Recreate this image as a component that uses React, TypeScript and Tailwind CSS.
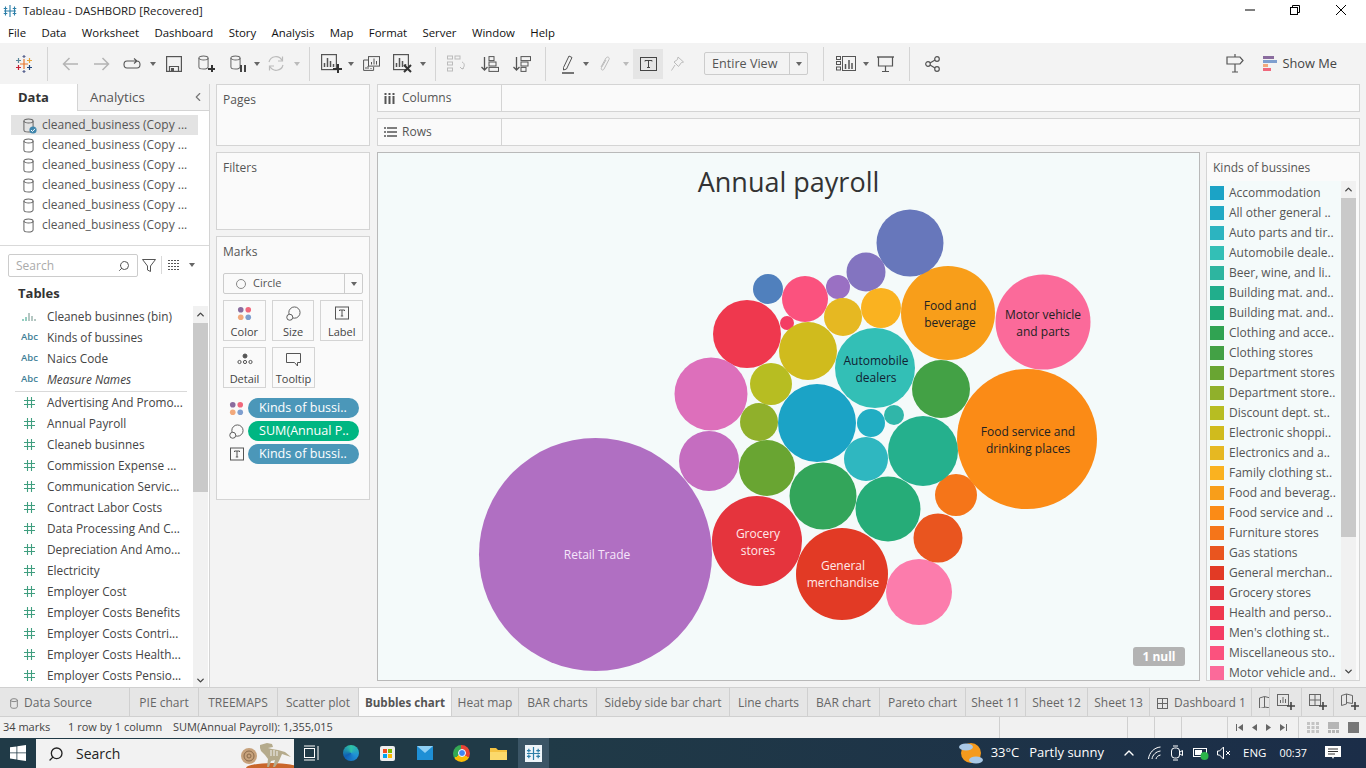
import React from 'react';
import { Search, ChevronLeft, ChevronUp, ChevronDown } from 'lucide-react';

const F = "[font-family:'Open_Sans',sans-serif]";

const Caret = ({ c = '#666' }: { c?: string }) => (
  <svg width="6" height="4" viewBox="0 0 6 4" className="shrink-0"><path d="M0 0h6L3 4z" fill={c} /></svg>
);

const Cyl = ({ c = '#555', w = 11, h = 15 }: { c?: string; w?: number; h?: number }) => (
  <svg width={w} height={h} viewBox="0 0 12 16" fill="none" stroke={c} strokeWidth="1.1" className="shrink-0">
    <ellipse cx="6" cy="3" rx="5" ry="2.2" />
    <path d="M1 3v10c0 1.3 2.2 2.2 5 2.2s5-.9 5-2.2V3" />
  </svg>
);

const Ico = ({ w = 20, h = 20, children }: { w?: number; h?: number; children: React.ReactNode }) => (
  <svg width={w} height={h} viewBox={`0 0 ${w} ${h}`} fill="none" stroke="#555" strokeWidth="1.2" className="shrink-0">{children}</svg>
);

const Colors = () => (
  <svg width="15" height="15" viewBox="0 0 16 16" className="shrink-0">
    <circle cx="4" cy="4" r="3" fill="#8a6c9e" /><circle cx="12" cy="4" r="3" fill="#f0687c" />
    <circle cx="4" cy="12" r="3" fill="#f2a97c" /><circle cx="12" cy="12" r="3" fill="#7f9fcf" />
  </svg>
);
const SizeI = () => (
  <svg width="15" height="15" viewBox="0 0 16 16" fill="none" stroke="#555" strokeWidth="1" className="shrink-0">
    <circle cx="9" cy="7" r="6" /><circle cx="4" cy="12" r="3.2" fill="#fafafa" />
  </svg>
);
const LabelI = () => (
  <svg width="14" height="14" viewBox="0 0 14 14" fill="none" stroke="#555" strokeWidth="1" className="shrink-0">
    <rect x=".5" y="1" width="13" height="12" /><path d="M4.5 5V4h5v1M7 4v6M5.8 10h2.4" />
  </svg>
);

const Sep = () => <div className="w-px h-[34px] bg-[#d4d4d4] shrink-0" />;

const ChartBase = () => (
  <Ico w={16} h={17}><rect x=".6" y=".6" width="14.800" height="15" /><path d="M3.500 13V9M6.500 13V4M9.500 13V7M12.500 13V10" strokeWidth="1.500" /></Ico>
);

function Toolbar() {
  return (
    <div className="h-[41px] bg-[#f3f3f3] flex items-center shrink-0 relative">
      <div className="w-[47px] flex justify-center shrink-0">
        <svg width="18" height="18" viewBox="0 0 18 18" strokeWidth="1.2" fill="none">
          <path d="M9 4v10M5 9h8" stroke="#e8762c" /><path d="M3.500 3v5M1 5.500h5" stroke="#5b879b" /><path d="M14.500 3v5M12 5.500h5" stroke="#e8a33a" />
          <path d="M3.500 10v5M1 12.500h5" stroke="#c72035" /><path d="M14.500 10v5M12 12.500h5" stroke="#1f447a" /><path d="M9 0v3M7.500 1.500h3M9 15v3M7.500 16.500h3" stroke="#5b6591" />
        </svg>
      </div>
      <Sep />
      <div className="ml-[14px]"><Ico w={16} h={14}><path d="M16 7H1.500M7.500 1L1.500 7l6 6" stroke="#b4b4b4" strokeWidth="1.500" /></Ico></div>
      <div className="ml-[16px]"><Ico w={16} h={14}><path d="M0 7h14.500M8.500 1l6 6-6 6" stroke="#b4b4b4" strokeWidth="1.500" /></Ico></div>
      <div className="ml-[13px]"><Ico w={18} h={11}><path d="M13 3H4C0 3 0 10 4 10h10c4 0 4-7 0-7M11 .5l3 2.500-3 2.500" strokeWidth="1.100" /></Ico></div>
      <div className="ml-[9px]"><Caret /></div>
      <div className="ml-[10px]"><Ico w={16} h={16}><rect x=".6" y=".6" width="14.800" height="14.800" /><path d="M3.500 15.500v-5h9v5" /><rect x="5" y="12" width="3" height="3" fill="#555" stroke="none" /></Ico></div>
      <div className="ml-[16px] relative w-[16px] h-[17px]"><Cyl c="#666" /><span className="absolute right-[-1px] bottom-[0px] w-[7px] h-[7px] bg-[linear-gradient(#333,#333)] bg-[length:7px_2px] bg-center bg-no-repeat" /><span className="absolute right-[-1px] bottom-[0px] w-[7px] h-[7px] bg-[linear-gradient(#333,#333)] bg-[length:2px_7px] bg-center bg-no-repeat" /></div>
      <div className="ml-[16px] relative w-[16px] h-[17px]"><Cyl c="#666" /><span className="absolute right-[0px] bottom-[0px] w-[6px] h-[7px] border-x-2 border-[#444]" /></div>
      <div className="ml-[8px]"><Caret /></div>
      <div className="ml-[7px]"><Ico w={18} h={17}><path d="M2 7a7 7 0 0 1 13-1.500M16 10a7 7 0 0 1-13 1.500" stroke="#bbb" /><path d="M15.500 1.500v4.500h-4.500M2.500 15.500v-4.500h4.500" stroke="#bbb" /></Ico></div>
      <div className="ml-[9px]"><Caret c="#bbb" /></div>
      <div className="ml-[9px]"><Sep /></div>
      <div className="ml-[11px] relative w-[21px] h-[19px]">
        <ChartBase />
        <span className="absolute right-0 bottom-0 w-[9px] h-[9px] bg-[linear-gradient(#333,#333)] bg-[length:9px_2px] bg-center bg-no-repeat" />
        <span className="absolute right-0 bottom-0 w-[9px] h-[9px] bg-[linear-gradient(#333,#333)] bg-[length:2px_9px] bg-center bg-no-repeat" />
      </div>
      <div className="ml-[6px]"><Caret /></div>
      <div className="ml-[9px]"><Ico w={17} h={15}><rect x="5.500" y=".6" width="11" height="9.500" fill="#f3f3f3" strokeWidth="1" /><path d="M8.500 8.500V6M11 8.500V2.500M13.500 8.500V5" strokeWidth="1" /><path d="M5 4H.6v10.400h10v-3.500M3 13v-2M5 13v-3M8 13v-1" strokeWidth="1" /></Ico></div>
      <div className="ml-[13px] relative w-[18px] h-[19px]">
        <ChartBase />
        <svg width="9" height="9" viewBox="0 0 9 9" className="absolute right-[-1px] bottom-[0px]"><path d="M1 1l7 7M8 1L1 8" stroke="#333" strokeWidth="2" /></svg>
      </div>
      <div className="ml-[9px]"><Caret /></div>
      <div className="ml-[9px]"><Sep /></div>
      <div className="ml-[11px]"><Ico w={20} h={18}><g stroke="#bbb" strokeWidth="1"><rect x=".5" y="1" width="5" height="3" /><rect x=".5" y="7" width="5" height="3" /><rect x=".5" y="13" width="5" height="3" /><rect x="8" y="1" width="5" height="3" /><path d="M15 7c3 1 3 5 0 7M13 12l2 2 2-1" /></g></Ico></div>
      <div className="ml-[14px]"><Ico w={18} h={16}><path d="M3.500 1v13M.5 11l3 3 3-3" strokeWidth="1.300" /><rect x="8" y=".6" width="5" height="4" strokeWidth="1" /><rect x="8" y="6" width="7" height="4" strokeWidth="1" /><rect x="8" y="11.400" width="9.500" height="4" strokeWidth="1" /></Ico></div>
      <div className="ml-[14px]"><Ico w={18} h={16}><path d="M3.500 1v13M.5 11l3 3 3-3" strokeWidth="1.300" /><rect x="8" y=".6" width="9.500" height="4" strokeWidth="1" /><rect x="8" y="6" width="7" height="4" strokeWidth="1" /><rect x="8" y="11.400" width="5" height="4" strokeWidth="1" /></Ico></div>
      <div className="ml-[14px]"><Sep /></div>
      <div className="ml-[16px]"><Ico w={12} h={20}><path d="M1.500 13.500L7 2l3 1.500-5.500 11.500-3 1z" strokeWidth="1" /><path d="M0 19h12" strokeWidth="1.600" /></Ico></div>
      <div className="ml-[9px]"><Caret /></div>
      <div className="ml-[10px]"><Ico w={12} h={17}><path d="M2 12L7 3c1.500-2 4-.5 3 1.500L5 14c-1 2-3.500 1-2.500-1.500L7 5" stroke="#bbb" strokeWidth="1" /></Ico></div>
      <div className="ml-[12px]"><Caret c="#bbb" /></div>
      <div className="ml-[4px] w-[30px] h-[30px] bg-[#e5e5e5] flex items-center justify-center">
        <svg width="17" height="14" viewBox="0 0 17 14" fill="none" stroke="#444" strokeWidth="1"><rect x=".5" y=".5" width="16" height="13" /><path d="M5 4.500V3.500h7v1M8.500 3.500v7M7 10.500h3" /></svg>
      </div>
      <div className="ml-[8px]"><Ico w={13} h={15}><path d="M7 1l5.500 5-2 .5-3 4-4.500-4.500 3.500-2.500zM4 9l-3.500 5.500" stroke="#bbb" strokeWidth="1" /></Ico></div>
      <div className={`ml-[20px] w-[104px] h-[23px] border border-[#ccc] rounded-[2px] flex items-center bg-[#f3f3f3] text-[#555] text-[12.600px] shrink-0 ${F}`}>
        <span className="w-[85px] pl-[7px] pt-[1px] border-r border-[#ccc] h-full flex items-center whitespace-nowrap">Entire View</span>
        <span className="flex-1 flex justify-center"><Caret /></span>
      </div>
      <div className="ml-[15px]"><Sep /></div>
      <div className="ml-[12px]"><Ico w={20} h={15}><g strokeWidth="1"><rect x=".5" y=".5" width="4" height="3" /><rect x=".5" y="5.500" width="4" height="3" /><rect x=".5" y="11" width="4" height="3" /><rect x="6.500" y=".5" width="13" height="14" /><path d="M9.500 13V8M13 13V4M16 13V7" strokeWidth="1.500" /></g></Ico></div>
      <div className="ml-[7px]"><Caret /></div>
      <div className="ml-[8px]"><Ico w={17} h={16}><path d="M0 1h17" strokeWidth="1.400" /><path d="M1.500 1v9h14V1M8.500 10v5M5 15.500h7" /></Ico></div>
      <div className="ml-[15px]"><Sep /></div>
      <div className="ml-[15px]"><Ico w={15} h={16}><circle cx="3" cy="8" r="2.300" /><circle cx="12" cy="3" r="2.300" /><circle cx="12" cy="13" r="2.300" /><path d="M5 7l5-3M5 9l5 3" /></Ico></div>
      <div className="ml-auto flex items-center">
        <Ico w={18} h={19}><path d="M9 0v3M1 3h13l3 3.500-3 3.500H1zM9 10v8M6 18h6" /></Ico>
        <svg width="14" height="15" viewBox="0 0 14 15" className="ml-[19px]"><rect width="11" height="3" fill="#8a6c9e" /><rect y="4" width="14" height="3" fill="#7f9fcf" /><rect y="8" width="5" height="3" fill="#f2a97c" /><rect y="12" width="8" height="3" fill="#f0687c" /></svg>
        <span className={`ml-[6px] mr-[29px] text-[12.800px] text-[#444] ${F}`}>Show Me</span>
      </div>
    </div>
  );
}

const dsName = 'cleaned_business (Copy ...';

function DataRow({ active }: { active?: boolean }) {
  return (
    <div className={`h-5 ml-[11px] w-[187px] flex items-center pl-[12px] ${active ? 'bg-[#e3e3e3]' : ''} relative`}>
      <Cyl c="#666" />
      {active && (
        <svg width="8" height="8" viewBox="0 0 8 8" className="absolute left-[18px] top-[11px]">
          <circle cx="4" cy="4" r="3.600" fill="#3f86ad" /><path d="M2 4l1.500 1.500L6 2.800" stroke="#fff" fill="none" />
        </svg>
      )}
      <span className={`ml-[8px] text-[12px] text-[#555] whitespace-nowrap ${F}`}>{dsName}</span>
    </div>
  );
}

type Fld = { n: string; t: '#' | 'Abc' | 'bin'; i?: boolean };
const fields: Fld[] = [
  { n: 'Cleaneb businnes (bin)', t: 'bin' }, { n: 'Kinds of bussines', t: 'Abc' }, { n: 'Naics Code', t: 'Abc' },
  { n: 'Measure Names', t: 'Abc', i: true }, { n: 'Advertising And Promo...', t: '#' }, { n: 'Annual Payroll', t: '#' },
  { n: 'Cleaneb businnes', t: '#' }, { n: 'Commission Expense ...', t: '#' }, { n: 'Communication Servic...', t: '#' },
  { n: 'Contract Labor Costs', t: '#' }, { n: 'Data Processing And C...', t: '#' }, { n: 'Depreciation And Amo...', t: '#' },
  { n: 'Electricity', t: '#' }, { n: 'Employer Cost', t: '#' }, { n: 'Employer Costs Benefits', t: '#' },
  { n: 'Employer Costs Contri...', t: '#' }, { n: 'Employer Costs Health...', t: '#' }, { n: 'Employer Costs Pensio...', t: '#' },
];

function FieldRow({ f, idx }: { f: Fld; idx: number }) {
  return (
    <div className={`${idx === 3 ? 'h-[23px] pb-[2px]' : 'h-[21px]'} flex items-center relative whitespace-nowrap`}>
      <span className="w-[47px] pl-[21px] shrink-0 flex items-center">
        {f.t === '#' && (
          <svg width="11" height="11" viewBox="0 0 11 11" stroke="#3f9e7f" strokeWidth="1.100" className="ml-[3px]"><path d="M3.500 0v11M7.500 0v11M0 3.500h11M0 7.500h11" /></svg>
        )}
        {f.t === 'Abc' && <span className={`text-[9.500px] font-semibold text-[#3f7f98] ${F}`}>Abc</span>}
        {f.t === 'bin' && (
          <svg width="15" height="10" viewBox="0 0 15 10" fill="none" strokeWidth="1" className="ml-[1px]"><path d="M1 9V7M4 9V5" stroke="#2a9d83" /><path d="M7 9V1M10 9V4M13 9V7" stroke="#6b8f86" /></svg>
        )}
      </span>
      <span className={`text-[11.800px] text-[#444] ${f.i ? 'italic' : ''} ${F}`}>{f.n}</span>
      {idx === 3 && <span className="absolute left-[15px] right-[6px] bottom-0 h-px bg-[#d9d9d9]" />}
    </div>
  );
}

function LeftPanel() {
  return (
    <div className="w-[210px] shrink-0 bg-white border-r border-[#d4d4d4] flex flex-col">
      <div className="h-[27px] flex items-stretch relative shrink-0">
        <div className={`w-[77px] flex items-center pl-[18px] text-[13px] font-bold text-[#333] bg-white ${F}`}>Data</div>
        <div className={`flex-1 bg-[#f3f3f3] border-l border-b border-[#d4d4d4] flex items-center pl-[12px] pt-[1px] text-[13.300px] text-[#555] ${F}`}>Analytics</div>
        <ChevronLeft className="absolute right-[4px] top-[6px] text-[#777]" size={14} />
      </div>
      <div className="pt-[4px] h-[135px] border-b border-[#d9d9d9] shrink-0">
        <DataRow active /><DataRow /><DataRow /><DataRow /><DataRow /><DataRow />
      </div>
      <div className="flex items-start h-[39px] pl-[8px] pt-[8px] shrink-0">
        <div className="w-[130px] h-[23px] border border-[#ccc] rounded-[2px] flex items-center px-[7px] justify-between">
          <span className={`text-[12px] text-[#aaa] ${F}`}>Search</span>
          <Search size={12} className="text-[#555] -scale-x-100" />
        </div>
        <svg width="14" height="13" viewBox="0 0 14 13" fill="none" stroke="#555" className="ml-[4px] mt-[5px]"><path d="M.5.500h13L8.500 7v5.500l-3-1.500V7z" /></svg>
        <span className="w-px h-[18px] bg-[#d9d9d9] ml-[5px] mt-[2px]" />
        <svg width="12" height="10" viewBox="0 0 12 10" className="ml-[6px] mt-[6px]" fill="none" stroke="#555"><path d="M0 .5h12M0 3.500h12M0 6.500h12M0 9.500h12" strokeDasharray="2 1" /></svg>
        <span className="ml-[9px] mt-[9px]"><Caret /></span>
      </div>
      <div className={`h-[18px] pl-[18px] flex items-center text-[13px] font-bold text-[#333] shrink-0 ${F}`}>Tables</div>
      <div className="flex-1 flex min-h-0 overflow-hidden pt-[3px]">
        <div className="flex-1 overflow-hidden">
          {fields.map((f, i) => <FieldRow key={i} f={f} idx={i} />)}
        </div>
        <div className="w-[15px] mr-[1px] flex flex-col bg-[#f1f1f1]">
          <div className="h-[17px] flex items-center justify-center"><ChevronUp size={11} strokeWidth={3} className="text-[#444]" /></div>
          <div className="h-[169px] bg-[#c9c9c9]" />
          <div className="flex-1" />
          <div className="h-[14px] flex items-center justify-center"><ChevronDown size={11} strokeWidth={3} className="text-[#444]" /></div>
        </div>
      </div>
    </div>
  );
}

const Card = ({ label, children }: { label: string; children: React.ReactNode }) => (
  <div className="w-[43px] h-[41px] border border-[#d4d4d4] bg-[#fafafa] flex flex-col items-center pt-[5px] justify-between pb-[1px]">
    {children}
    <span className={`text-[11px] leading-[15px] text-[#444] ${F}`}>{label}</span>
  </div>
);

const Pill = ({ icon, text, c }: { icon: React.ReactNode; text: string; c: string }) => (
  <div className="flex items-center h-[20px] mb-[3px]">
    <span className="w-[25px] flex justify-end pr-[4px]">{icon}</span>
    <span style={{ backgroundColor: c }} className={`w-[111px] h-[20px] rounded-full text-white text-[12.600px] flex items-center pl-[11px] whitespace-nowrap ${F}`}>{text}</span>
  </div>
);

function MiddlePanel() {
  return (
    <div className="w-[154px] shrink-0 flex flex-col ml-[6px]">
      <div className="h-[62px] border border-[#d4d4d4] bg-[#fafafa] pl-[6px] pt-[6px] shrink-0">
        <div className={`text-[12px] text-[#555] ${F}`}>Pages</div>
      </div>
      <div className="h-[78px] mt-[6px] border border-[#d4d4d4] bg-[#fafafa] pl-[6px] pt-[6px] shrink-0">
        <div className={`text-[12px] text-[#555] ${F}`}>Filters</div>
      </div>
      <div className="h-[264px] mt-[6px] border border-[#d4d4d4] bg-[#fafafa] px-[6px] pt-[6px] shrink-0">
        <div className={`text-[12px] text-[#555] ${F}`}>Marks</div>
        <div className="mt-[12px] w-[140px] h-[21px] border border-[#ccc] rounded-[2px] flex items-center">
          <span className="ml-[12px] w-[10px] h-[10px] rounded-full border border-[#888]" />
          <span className={`ml-[7px] text-[11px] text-[#555] flex-1 ${F}`}>Circle</span>
          <span className="w-[18px] h-full border-l border-[#ccc] flex items-center justify-center"><Caret /></span>
        </div>
        <div className="mt-[6px] flex gap-[6px]">
          <Card label="Color"><Colors /></Card>
          <Card label="Size"><SizeI /></Card>
          <Card label="Label"><LabelI /></Card>
        </div>
        <div className="mt-[6px] flex gap-[6px]">
          <Card label="Detail">
            <svg width="16" height="12" viewBox="0 0 16 12" fill="none" stroke="#555" strokeWidth="1"><circle cx="8" cy="3" r="2" fill="#555" /><circle cx="2.500" cy="9" r="1.600" /><circle cx="8" cy="9" r="1.600" /><circle cx="13.500" cy="9" r="1.600" /></svg>
          </Card>
          <Card label="Tooltip">
            <svg width="15" height="14" viewBox="0 0 15 14" fill="none" stroke="#555" strokeWidth="1"><path d="M.5.500h14v9h-3v3.500l-3-3.500h-8z" /></svg>
          </Card>
        </div>
        <div className="mt-[10px]">
          <Pill icon={<Colors />} text="Kinds of bussi.." c="#4b97b9" />
          <Pill icon={<SizeI />} text="SUM(Annual P.." c="#00b682" />
          <Pill icon={<LabelI />} text="Kinds of bussi.." c="#4b97b9" />
        </div>
      </div>
    </div>
  );
}

const Shelf = ({ icon, label }: { icon: React.ReactNode; label: string }) => (
  <div className="h-[28px] border border-[#d4d4d4] bg-[#fafafa] flex items-stretch shrink-0">
    <div className="w-[124px] border-r border-[#d4d4d4] flex items-center pl-[6px] gap-[5px]">
      <span className="w-[13px] flex items-center">{icon}</span>
      <span className={`text-[12px] text-[#555] ${F}`}>{label}</span>
    </div>
  </div>
);

type B = [number, number, number, string];
const bubbles: B[] = [
  [595.5, 554.5, 116.5, '#b06fc2'], [757, 541, 45, '#e5343d'], [842, 574, 46, '#e23a25'], [919, 592, 33, '#fc7cac'],
  [938, 538, 24.5, '#e9551f'], [956, 495, 21, '#f57519'], [1027, 439, 70, '#fb8b16'], [1043, 322, 47.5, '#fb6a9a'],
  [948, 313, 47, '#f89e1a'], [910, 243, 33.5, '#6777bb'], [866, 272, 19.5, '#8374c0'], [838, 287, 12, '#9a70c3'],
  [768, 289, 15, '#5080bd'], [805, 299, 23, '#fb527e'], [747, 334, 34, '#ef384e'], [787, 323, 7, '#f43d64'],
  [881, 308, 20, '#fab220'], [843, 317, 19, '#e6b822'], [808, 351, 29, '#d0bb1d'], [875, 368, 40, '#33bfb6'],
  [941, 389, 29, '#43a145'], [771, 384, 21, '#b7bd22'], [711, 394, 36.5, '#dd6fbb'], [759, 422, 19, '#90b02b'],
  [817, 423, 39, '#1ba3c6'], [871, 423, 14, '#21adc3'], [894, 415, 10, '#30b6a9'], [923, 451, 35, '#25b08d'],
  [866, 459, 22, '#2fb7c0'], [709, 461, 30, '#c56dc0'], [767, 468, 28, '#69a532'], [823, 496, 33.5, '#33a55a'],
  [888, 509, 32.5, '#26ac78'],
];
const labels: [number, number, string, string][] = [
  [597, 555, 'Retail Trade', '#f6e6fa'], [758, 534, 'Grocery', '#ffe9e9'], [758, 551, 'stores', '#ffe9e9'],
  [843, 566, 'General', '#ffe9e9'], [843, 583, 'merchandise', '#ffe9e9'],
  [1028, 432, 'Food service and', '#222'], [1028, 449, 'drinking places', '#222'],
  [1043, 315, 'Motor vehicle', '#222'], [1043, 332, 'and parts', '#222'],
  [950, 306, 'Food and', '#222'], [950, 323, 'beverage', '#222'],
  [876, 361, 'Automobile', '#123'], [876, 378, 'dealers', '#123'],
];

function Viz() {
  // The bubble pack is a drawing; its coordinates are page coordinates offset by the view origin.
  const ox = 377, oy = 152;
  return (
    <div className="w-[823px] h-[529px] border border-[#b9b9b9] bg-[#f4fafa] relative shrink-0 overflow-hidden">
      <div className={`text-center pt-[11px] text-[27px] leading-[36px] text-[#333] ${F}`}>Annual payroll</div>
      <svg width="821" height="527" viewBox={`${ox + 1} ${oy + 1} 821 527`} className="absolute left-0 top-0">
        {bubbles.map((b, i) => <circle key={i} cx={b[0]} cy={b[1]} r={b[2]} fill={b[3]} />)}
        {labels.map((l, i) => (
          <text key={i} x={l[0]} y={l[1] + 4} textAnchor="middle" fill={l[3]} fontSize="12" fontFamily="'Open Sans',sans-serif">{l[2]}</text>
        ))}
      </svg>
      <div className={`absolute right-[14px] bottom-[14px] w-[52px] h-[19px] bg-[#b3b3b3] rounded-[3px] text-white text-[12px] font-bold flex items-center justify-center ${F}`}>1 null</div>
    </div>
  );
}

const legend: [string, string][] = [
  ['Accommodation', '#1ba3c6'], ['All other general ..', '#21a9c4'], ['Auto parts and tir..', '#2cb4c0'], ['Automobile deale..', '#33bfb6'],
  ['Beer, wine, and li..', '#2db5a0'], ['Building mat. and..', '#21ae8c'], ['Building mat. and..', '#1fa975'], ['Clothing and acce..', '#30a352'],
  ['Clothing stores', '#43a145'], ['Department stores', '#69a532'], ['Department store..', '#90b02b'], ['Discount dept. st..', '#b7bd22'],
  ['Electronic shoppi..', '#d0bb1d'], ['Electronics and a..', '#e6b822'], ['Family clothing st..', '#fab220'], ['Food and beverag..', '#f89e1a'],
  ['Food service and ..', '#fb8b16'], ['Furniture stores', '#f57519'], ['Gas stations', '#e9551f'], ['General merchan..', '#e23a25'],
  ['Grocery stores', '#e5343d'], ['Health and perso..', '#ef384e'], ["Men's clothing st..", '#f43d64'], ['Miscellaneous sto..', '#fb527e'],
  ['Motor vehicle and..', '#fb6a9a'],
];

function Legend() {
  return (
    <div className="w-[154px] h-[529px] ml-[6px] border border-[#d4d4d4] bg-[#fafafa] shrink-0 relative overflow-hidden">
      <div className={`h-[28px] pl-[6px] pt-[2px] flex items-center text-[12px] text-[#555] ${F}`}>Kinds of bussines</div>
      <div className="flex h-[499px] bg-[#f4fafa] mr-[3px]">
        <div className="flex-1 pl-[3px] pt-[2px] overflow-hidden">
          {legend.map(([n, c], i) =>
            i < legend.length - 1 ? (
              <div key={i} className="h-5 flex items-center whitespace-nowrap">
                <span style={{ backgroundColor: c }} className="w-[14px] h-[14px] shrink-0" />
                <span className={`ml-[5px] text-[12px] text-[#555] ${F}`}>{n}</span>
              </div>
            ) : (
              <div key={i} className="h-[17px] pt-[3px] flex items-start whitespace-nowrap">
                <span style={{ backgroundColor: c }} className="w-[14px] h-[14px] shrink-0" />
                <span className={`ml-[5px] text-[12px] leading-[14px] text-[#555] ${F}`}>{n}</span>
              </div>
            ),
          )}
        </div>
        <div className="w-[15px] flex flex-col bg-[#f1f1f1] shrink-0">
          <div className="h-[17px] flex items-center justify-center"><ChevronUp size={11} strokeWidth={3} className="text-[#444]" /></div>
          <div className="h-[339px] bg-[#c9c9c9]" />
          <div className="flex-1" />
          <div className="h-[17px] flex items-center justify-center"><ChevronDown size={11} strokeWidth={3} className="text-[#444]" /></div>
        </div>
      </div>
    </div>
  );
}

const tabs: { t: string; w: string }[] = [
  { t: 'PIE chart', w: 'w-[69px]' }, { t: 'TREEMAPS', w: 'w-[79px]' }, { t: 'Scatter plot', w: 'w-[81px]' }, { t: 'Bubbles chart', w: 'w-[93px]' },
  { t: 'Heat map', w: 'w-[67px]' }, { t: 'BAR charts', w: 'w-[78px]' }, { t: 'Sideby side bar chart', w: 'w-[133px]' }, { t: 'Line charts', w: 'w-[78px]' },
  { t: 'BAR chart', w: 'w-[72px]' }, { t: 'Pareto chart', w: 'w-[86px]' }, { t: 'Sheet 11', w: 'w-[60px]' }, { t: 'Sheet 12', w: 'w-[62px]' }, { t: 'Sheet 13', w: 'w-[62px]' },
];

function Tabs() {
  return (
    <div className="h-[30px] bg-[#e6e6e6] border-y border-[#d0d0d0] flex shrink-0 relative overflow-hidden">
      <div className={`w-[130px] shrink-0 flex items-center pl-[10px] pt-[2px] gap-[6px] border-r border-[#d0d0d0] text-[12px] text-[#666] ${F}`}>
        <Cyl c="#666" w={8} h={11} /> Data Source
      </div>
      {tabs.map(({ t, w }) => (
        <div key={t} className={`${w} shrink-0 flex items-center justify-center border-r border-[#d0d0d0] whitespace-nowrap ${F} ${t === 'Bubbles chart' ? 'bg-[#fafafa] font-bold text-[11.600px] text-[#555] pt-[1px]' : 'text-[12px] text-[#666] pt-[2px]'}`}>{t}</div>
      ))}
      <div className={`w-[102px] shrink-0 flex items-center pl-[7px] pt-[2px] gap-[6px] border-r border-[#d0d0d0] text-[12px] text-[#666] whitespace-nowrap ${F}`}>
        <svg width="11" height="11" viewBox="0 0 11 11" fill="none" stroke="#666"><rect x=".5" y=".5" width="10" height="10" /><path d="M5.500 0v11M0 5.500h11" /></svg>
        Dashboard 1
      </div>
      <div className="w-[17px] shrink-0 flex items-center pl-[7px] overflow-hidden">
        <svg width="12" height="12" viewBox="0 0 12 12" fill="none" stroke="#666" className="shrink-0"><path d="M.5 2l5-1.500v11l-5 1zM5.500.5l6 1.500v10l-6-1" /></svg>
      </div>
      {[0, 1, 2].map((i) => (
        <div key={i} className="w-[32px] shrink-0 border-l border-[#d0d0d0] flex items-center justify-center relative">
          <svg width="18" height="18" viewBox="0 0 18 18" fill="none" stroke="#666">
            {i === 0 && <><rect x=".5" y="1.500" width="11" height="11" /><path d="M3.500 10V7M6 10V4M8.500 10V6" /></>}
            {i === 1 && <><rect x=".5" y="1.500" width="11" height="11" /><path d="M6 1.500v11M.5 7h11" /></>}
            {i === 2 && <path d="M.5 2.500l5-1.500v10l-5 1.500zM5.500 1l6 1.500v8l-6-1" />}
            <path d="M14 9v8M10 13h8" stroke="#444" strokeWidth="1.600" />
          </svg>
        </div>
      ))}
    </div>
  );
}

function Status() {
  return (
    <div className={`h-[21px] bg-[#f1f1f1] flex items-center text-[11px] text-[#444] shrink-0 relative whitespace-nowrap ${F}`}>
      <span className="ml-[3px] w-[65px]">34 marks</span>
      <span className="w-[105px]">1 row by 1 column</span>
      <span className="w-[826px]">SUM(Annual Payroll): 1,355,015</span>
      <span className="h-full w-[128px] border-l border-[#d0d0d0]" />
      <span className="h-full w-[27px] border-l border-[#d0d0d0]" />
      <span className="h-full w-[27px] border-l border-[#d0d0d0]" />
      <span className="h-full w-[46px] border-l border-[#d0d0d0]" />
      <span className="h-full w-[71px] border-l border-[#d0d0d0] flex items-center pl-[8px] gap-[9px]">
        <svg width="7" height="7" viewBox="0 0 7 7"><path d="M0 0h1v7H0zM7 0v7L2 3.500z" fill="#666" /></svg>
        <svg width="5" height="7" viewBox="0 0 5 7"><path d="M5 0v7L0 3.500z" fill="#666" /></svg>
        <svg width="5" height="7" viewBox="0 0 5 7"><path d="M0 0v7l5-3.500z" fill="#666" /></svg>
        <svg width="7" height="7" viewBox="0 0 7 7"><path d="M0 0v7l5-3.500zM6 0h1v7H6z" fill="#666" /></svg>
      </span>
      <span className="h-full flex-1 border-l border-[#d0d0d0] flex items-center gap-[9px] pl-[8px]">
        <svg width="12" height="11" viewBox="0 0 12 11" fill="#c4c4c4"><path d="M0 0h3v3H0zM4.500 0h3v3h-3zM9 0h3v3H9zM0 4h3v3H0zM4.500 4h3v3h-3zM9 4h3v3H9zM0 8h3v3H0zM4.500 8h3v3h-3zM9 8h3v3H9z" /></svg>
        <svg width="11" height="11" viewBox="0 0 11 11" fill="#b5b5b5"><path d="M0 0h11v7H0zM0 8h3v3H0zM4 8h3v3H4zM8 8h3v3H8z" /></svg>
        <span className="w-[11px] h-[11px] bg-[#777]" />
      </span>
    </div>
  );
}

function Taskbar() {
  return (
    <div className={`h-[30px] bg-[linear-gradient(90deg,#203a47_0%,#203a47_40%,#1b2d48_100%)] flex items-center shrink-0 text-white ${F}`}>
      <div className="w-[36px] flex justify-center">
        <svg width="16" height="16" viewBox="0 0 16 16" fill="#fff"><path d="M0 2.300L6.500 1.400V7.500H0zM7.300 1.300L16 0v7.500H7.300zM0 8.300H6.500V14.500L0 13.600zM7.300 8.300H16V16L7.300 14.700z" /></svg>
      </div>
      <div className="w-[258px] h-[29px] mt-[1px] bg-[#f2f2f2] flex items-center relative overflow-hidden">
        <Search size={16} className="ml-[12px] text-[#222] -scale-x-100" />
        <span className="ml-[12px] text-[14px] text-[#222]">Search</span>
        <svg width="56" height="29" viewBox="0 0 56 29" className="absolute right-0 top-0">
          <ellipse cx="34" cy="29" rx="26" ry="5" fill="#c9662b" />
          <circle cx="11" cy="17" r="8" fill="#c7a27c" /><circle cx="11" cy="17" r="5" fill="none" stroke="#8a6a4a" /><circle cx="11" cy="17" r="2" fill="none" stroke="#8a6a4a" />
          <path d="M22 6l7-2 5 1 1 3-5 1 4 1 6 1 7 2 6 5-9-3-3 7-4 6h-2l2-7-4 1-2 6h-2l1-8-3-4-4-4-1-3z" fill="#b5ab8c" />
          <path d="M33 11v6M36 11v6M39 12v5" stroke="#f2f2f2" />
        </svg>
      </div>
      <div className="ml-[10px]"><svg width="16" height="16" viewBox="0 0 16 16" fill="none" stroke="#fff"><rect x=".5" y="3.500" width="10" height="9" /><path d="M0 1h11M0 15h11M14 1v14" /></svg></div>
      <div className="ml-[23px] w-[16px] h-[16px] rounded-full bg-[conic-gradient(#2fc4a5,#1f8fd6,#0f5fb5,#2fc4a5)]" />
      <div className="ml-[21px] w-[15px] h-[15px] bg-[#eee] rounded-[2px] grid grid-cols-2 p-[3px] gap-[1px]">
        <span className="bg-[#f25022]" /><span className="bg-[#7fba00]" /><span className="bg-[#00a4ef]" /><span className="bg-[#ffb900]" />
      </div>
      <div className="ml-[22px]"><svg width="16" height="14" viewBox="0 0 16 14"><rect width="16" height="14" fill="#1e8fd5" /><path d="M0 0l8 7 8-7z" fill="#8fd0f5" /></svg></div>
      <div className="ml-[20px] w-[17px] h-[17px] rounded-full bg-[conic-gradient(#ea4335_0_33%,#fbbc05_33%_66%,#34a853_66%)] flex items-center justify-center"><span className="w-[6px] h-[6px] rounded-full bg-[#4285f4] border border-white box-content" /></div>
      <div className="ml-[20px]"><svg width="17" height="14" viewBox="0 0 17 14"><path d="M0 2h6l2 2h9v10H0z" fill="#f5c342" /><path d="M0 6h17v8H0z" fill="#fbd96b" /></svg></div>
      <div className="ml-[11px] w-[31px] h-[30px] bg-[#3b5566] flex items-center justify-center">
        <span className="w-[17px] h-[17px] bg-[#eef5fa] flex items-center justify-center">
          <svg width="15" height="15" viewBox="0 0 16 16" stroke="#2d7fa8" strokeWidth="1.300"><path d="M8 1v14M1 8h14M3 3v4M1 5h4M13 3v4M11 5h4M3 9v4M1 11h4M13 9v4M11 11h4" /></svg>
        </span>
      </div>
      <div className="ml-auto flex items-center h-full">
        <svg width="24" height="24" viewBox="0 0 24 24"><circle cx="12" cy="12" r="10" fill="#f59a1c" /><ellipse cx="7" cy="6" rx="7" ry="3.500" fill="#a9c8e6" /><ellipse cx="17" cy="19" rx="7" ry="3.500" fill="#a9c8e6" /></svg>
        <span className="ml-[8px] text-[13px]">33°C</span>
        <span className="ml-[10px] text-[13px]">Partly sunny</span>
        <ChevronUp size={16} className="ml-[17px]" />
        <svg width="13" height="14" viewBox="0 0 13 14" fill="none" stroke="#fff" className="ml-[11px]"><path d="M.5 13C1 7 6 1.500 12.500 1M4 13c.5-4 4-7.500 8.500-8M8 13c.5-2 2-3.500 4.500-4" /></svg>
        <svg width="12" height="16" viewBox="0 0 12 16" fill="none" stroke="#fff" className="ml-[10px]"><rect x=".5" y="3" width="8" height="10" rx="3" /><path d="M2 1h5M2 15h5M9 7l2.500-1.500v5L9 9" /></svg>
        <svg width="16" height="14" viewBox="0 0 16 14" className="ml-[10px]"><rect x=".5" y="2.500" width="13" height="8" fill="none" stroke="#fff" /><rect x="2" y="4" width="7" height="5" fill="#fff" /><circle cx="11.500" cy="10" r="4" fill="#2bb44a" /></svg>
        <svg width="14" height="14" viewBox="0 0 14 14" fill="none" stroke="#fff" className="ml-[8px]"><path d="M.5 5h2l4-4v12l-4-4h-2zM9 5l4 4M13 5l-4 4" /></svg>
        <span className="ml-[12px] text-[11.500px]">ENG</span>
        <span className="ml-[13px] text-[10.800px]">00:37</span>
        <svg width="16" height="16" viewBox="0 0 16 16" className="ml-[18px] mr-[25px]"><path d="M0 1h16v11H9l-1 2-1-2H0z" fill="#fff" /><path d="M3 4h10M3 6.500h10M3 9h7" stroke="#333" /></svg>
      </div>
    </div>
  );
}

const menu = ['File', 'Data', 'Worksheet', 'Dashboard', 'Story', 'Analysis', 'Map', 'Format', 'Server', 'Window', 'Help'];

export default function App() {
  return (
    <div className={`w-[1366px] h-[768px] overflow-hidden bg-[#f3f3f3] flex flex-col ${F}`}>
      <div className="h-[22px] bg-white flex items-center shrink-0 relative">
        <svg width="14" height="14" viewBox="0 0 14 14" className="ml-[3px]" stroke="#2d7fa8" strokeWidth="1.100"><path d="M7 1v12M1 7h12M2.500 2.500v4M.7 4.500h3.600M11.500 2.500v4M9.700 4.500h3.600M2.500 7.500v4M.7 9.500h3.600M11.500 7.500v4M9.700 9.500h3.600" /></svg>
        <span className="ml-[6px] text-[11.400px] text-[#222]">Tableau - DASHBORD [Recovered]</span>
        <div className="ml-auto flex items-center h-full pb-[2px]">
          <svg width="10" height="2" viewBox="0 0 10 2" className="mr-[35px]"><path d="M0 1h10" stroke="#000" /></svg>
          <svg width="10" height="10" viewBox="0 0 10 10" fill="none" stroke="#000" className="mr-[36px]"><path d="M2.500 2.500V.5h7v7h-2" /><rect x=".5" y="2.500" width="7" height="7" /></svg>
          <svg width="10" height="10" viewBox="0 0 10 10" stroke="#000" className="mr-[20px]"><path d="M0 0l10 10M10 0L0 10" /></svg>
        </div>
      </div>
      <div className="h-[21px] bg-white flex items-center gap-[15.400px] pl-[8px] shrink-0 text-[11.400px] text-[#111]">
        {menu.map((t) => <span key={t}>{t}</span>)}
      </div>
      <Toolbar />
      <div className="flex-1 flex min-h-0">
        <LeftPanel />
        <MiddlePanel />
        <div className="ml-[7px] flex flex-col min-w-0">
          <Shelf icon={<svg width="11" height="11" viewBox="0 0 11 11" stroke="#555" strokeWidth="2"><path d="M1.500 3v8M5.500 3v8M9.500 3v8M1.500 0v2M5.500 0v2M9.500 0v2" /></svg>} label="Columns" />
          <div className="h-[6px]" />
          <Shelf icon={<svg width="13" height="10" viewBox="0 0 13 10" stroke="#555" strokeWidth="1.600"><path d="M3 1h10M3 5h10M3 9h10M0 1h2M0 5h2M0 9h2" /></svg>} label="Rows" />
          <div className="h-[6px]" />
          <div className="flex">
            <Viz />
            <Legend />
          </div>
        </div>
      </div>
      <Tabs />
      <Status />
      <Taskbar />
    </div>
  );
}
